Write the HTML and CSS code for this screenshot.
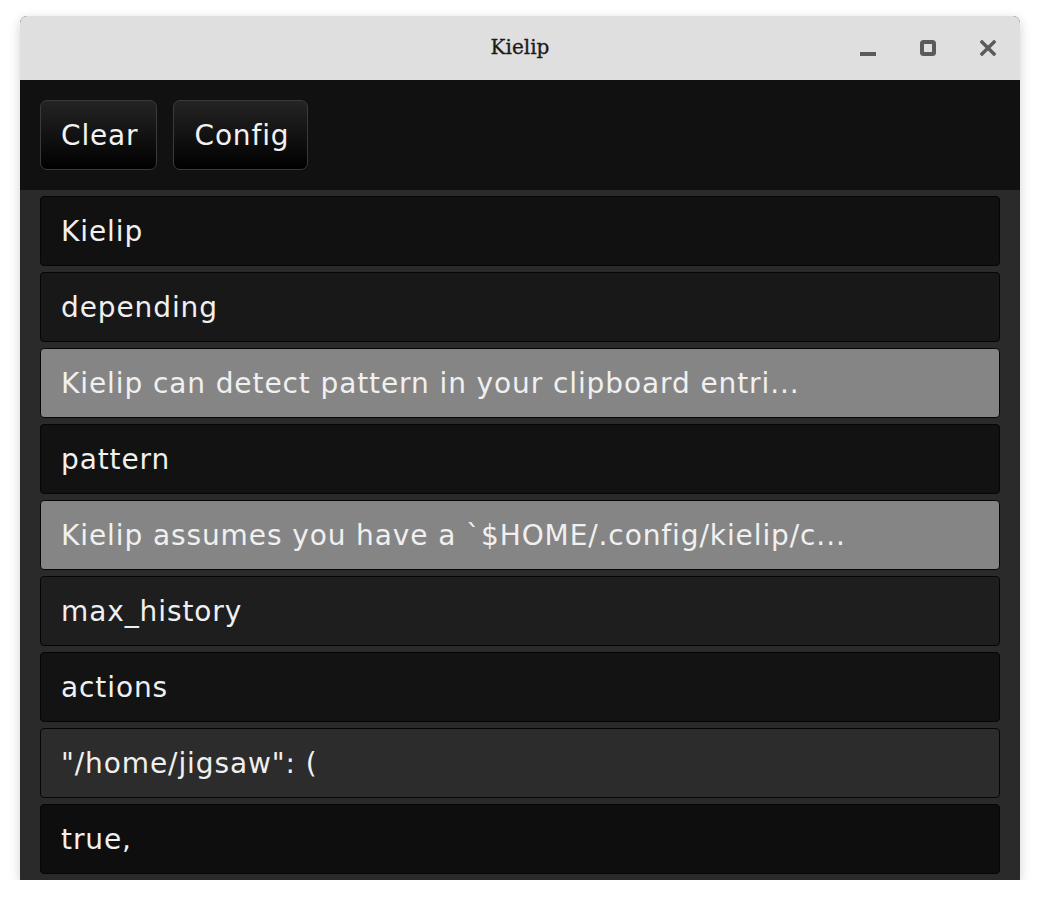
FILE: index.html
```html
<!DOCTYPE html>
<html>
<head>
<meta charset="utf-8">
<title>Kielip</title>
<link rel="stylesheet" href="styles.css">
</head>
<body>
<div class="window">
  <div class="titlebar">
    <div class="title">Kielip</div>
    <div class="controls">
      <svg class="ctl" width="16" height="16" viewBox="0 0 16 16"><rect x="0" y="12" width="16" height="4" fill="#5a5a5a"/></svg>
      <svg class="ctl" width="16" height="16" viewBox="0 0 16 16"><rect x="2" y="2" width="12" height="12" rx="1.5" fill="none" stroke="#5a5a5a" stroke-width="4"/></svg>
      <svg class="ctl" width="16" height="16" viewBox="0 0 16 16"><path d="M2 2 L14 14 M14 2 L2 14" stroke="#5a5a5a" stroke-width="3.4" stroke-linecap="square"/></svg>
    </div>
  </div>
  <div class="toolbar">
    <button class="btn">Clear</button>
    <button class="btn">Config</button>
  </div>
  <div class="list">
    <div class="item c1">Kielip</div>
    <div class="item c2">depending</div>
    <div class="item sel">Kielip can detect pattern in your clipboard entri...</div>
    <div class="item c4">pattern</div>
    <div class="item sel">Kielip assumes you have a `$HOME/.config/kielip/c...</div>
    <div class="item c6">max_history</div>
    <div class="item c7">actions</div>
    <div class="item c8">"/home/jigsaw": (</div>
    <div class="item c9">true,</div>
  </div>
</div>
</body>
</html>
```

FILE: styles.css
```css
html, body {
  margin: 0;
  padding: 0;
  background: #ffffff;
}
body {
  padding: 16px 20px 0;
  font-family: "DejaVu Sans", sans-serif;
}
.window {
  width: 1000px;
  height: 864px;
  display: flex;
  flex-direction: column;
  border-radius: 7px 7px 0 0;
  overflow: hidden;
  box-shadow: 0 3px 12px rgba(0,0,0,0.18);
  background: #2a2a2a;
}
.titlebar {
  height: 64px;
  flex: none;
  background: #dfdfdf;
  display: flex;
  align-items: center;
  justify-content: center;
  position: relative;
}
.title {
  font-family: "DejaVu Serif", serif;
  font-weight: normal;
  font-size: 20px;
  color: #1a1a1a;
  margin-top: -2px;
  -webkit-text-stroke: 0.3px #1a1a1a;
}
.controls {
  position: absolute;
  right: 24px;
  top: 24px;
  display: flex;
  gap: 44px;
}
.ctl { display: block; }
.toolbar {
  height: 110px;
  flex: none;
  box-sizing: border-box;
  background: #111111;
  padding: 20px;
  display: flex;
  gap: 16px;
}
.btn {
  height: 70px;
  box-sizing: border-box;
  padding: 1px 18px 0 20px;
  border: 1px solid #3a3a3a;
  border-radius: 7px;
  background: linear-gradient(#242424, #000000);
  color: #f2f2f2;
  font-family: "DejaVu Sans", sans-serif;
  font-size: 28px;
  letter-spacing: 0.85px;
}
.list {
  flex: 1;
  padding: 6px 20px;
  display: flex;
  flex-direction: column;
  gap: 6px;
}
.item {
  height: 70px;
  box-sizing: border-box;
  border: 1px solid #050505;
  border-radius: 4px;
  padding: 1px 20px 0;
  display: flex;
  align-items: center;
  color: #f0f0f0;
  font-size: 28px;
  letter-spacing: 0.9px;
  white-space: nowrap;
}
.c1 { background: #111111; }
.c2 { background: #181818; }
.sel { background: #858585; }
.c4 { background: #121212; }
.c6 { background: #1e1e1e; }
.c7 { background: #131313; }
.c8 { background: #2c2c2c; }
.c9 { background: #0e0e0e; }
```
